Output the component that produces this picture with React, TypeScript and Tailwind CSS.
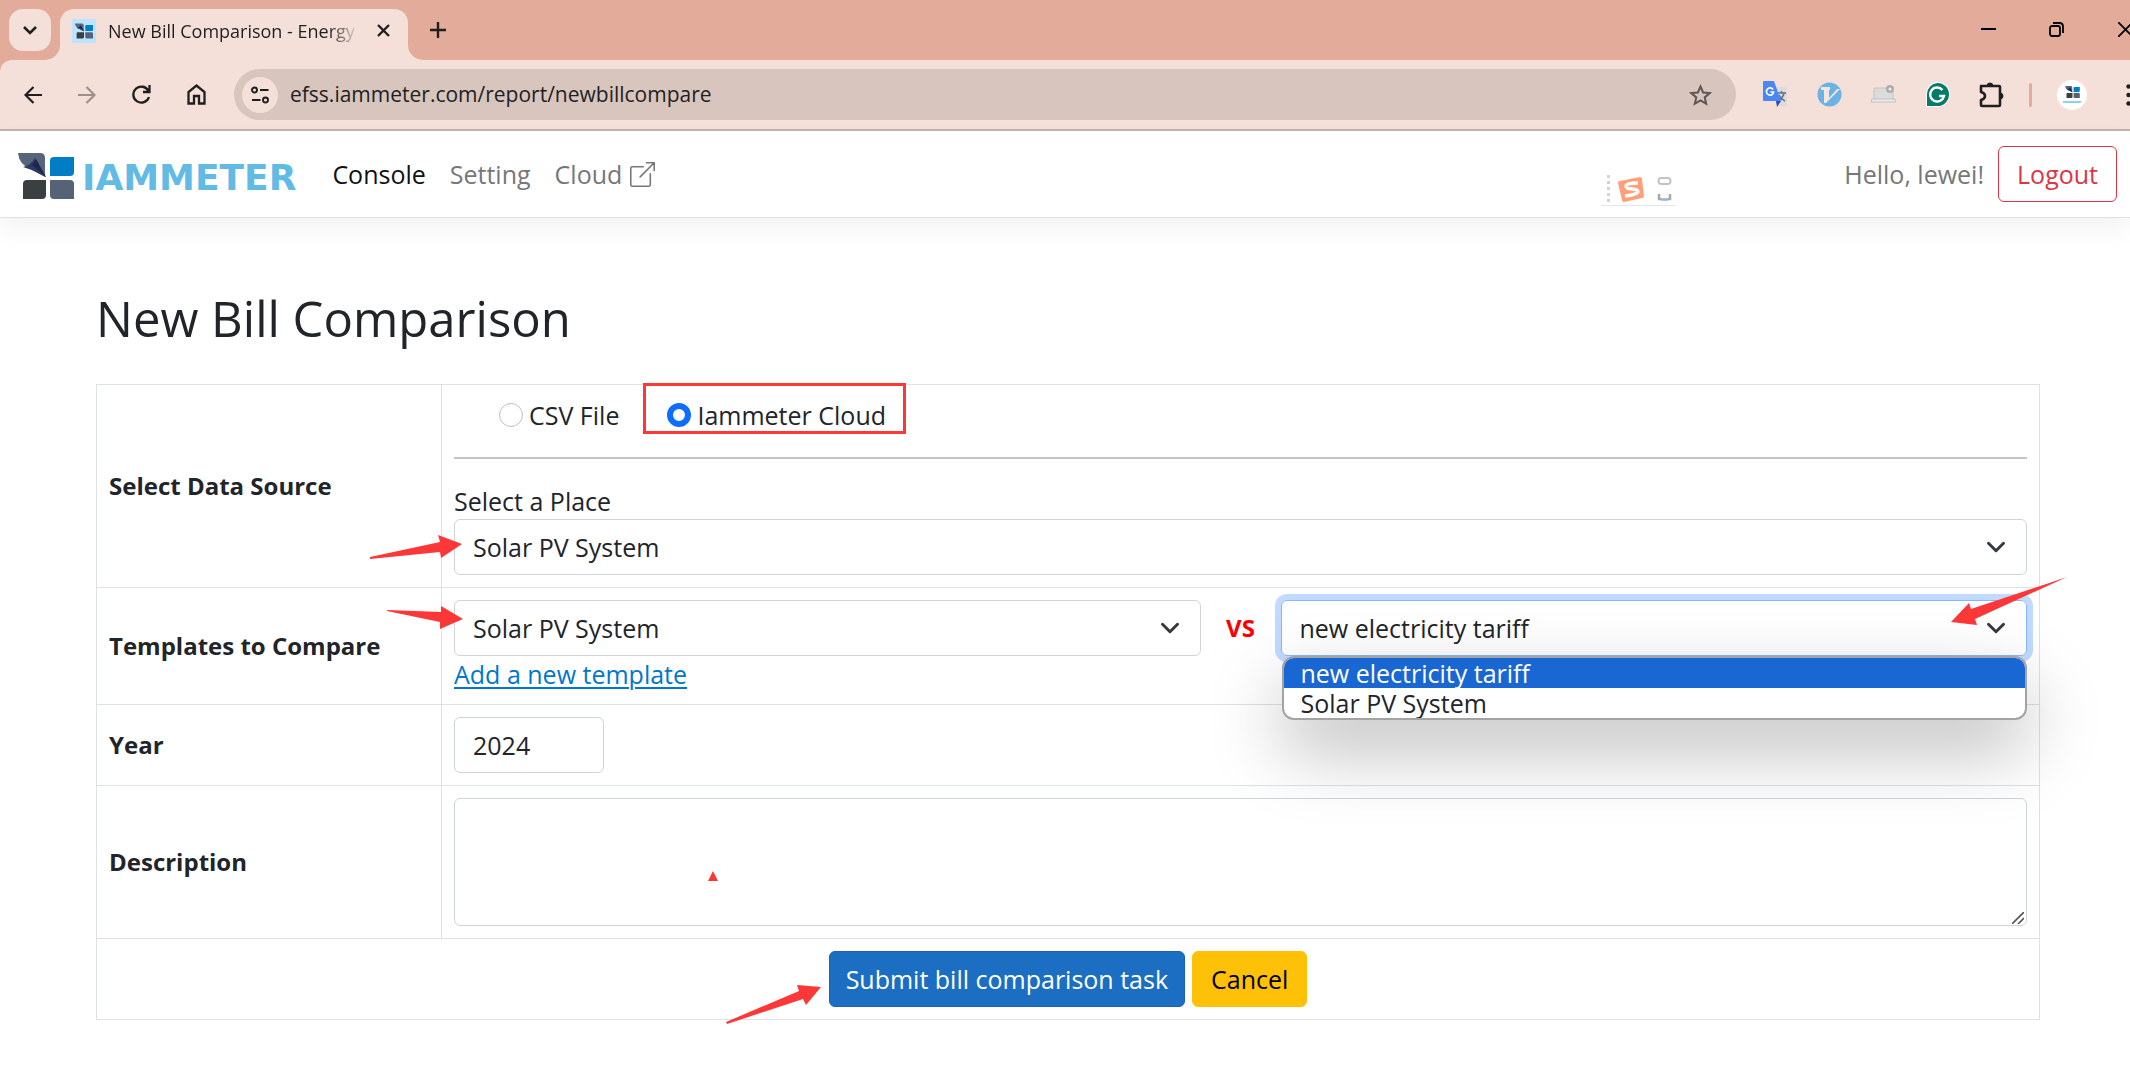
import React, { useState } from 'react';
import clsx from 'clsx';

const templates = ['new electricity tariff', 'Solar PV System'];

const iconButton = 'flex items-center justify-center shrink-0';
const fieldClass =
  'block w-full h-14 px-[18px] border border-[#ced4da] rounded-md bg-transparent text-[#212529] outline-none appearance-none';

/* ---------- drawings ---------- */

const LogoMark: React.FC<{ className?: string }> = ({ className }) => (
  <svg viewBox="0 0 56 46" className={className} aria-hidden="true">
    <path d="M0 0h22q5 0 5 5v19L14 17Q1 12 0 0z" fill="#56657a" />
    <path d="M5 14Q13 12 17 5l11 19-14-7z" fill="#2b3a6b" />
    <path d="M14 12l4-6 10 18z" fill="#1f2747" />
    <path d="M36 4h20v15q0 4-4 4H32V8q0-4 4-4z" fill="#007dc5" />
    <path d="M9 27h19v15q0 4-4 4H5V31q0-4 4-4z" fill="#3a3f42" />
    <path d="M32 27h20q4 0 4 4v15H36q-4 0-4-4z" fill="#566275" />
  </svg>
);

const Chevron = () => (
  <svg
    viewBox="0 0 16 16"
    className="absolute right-[19px] top-4 w-6 h-6 pointer-events-none"
    fill="none"
    stroke="#343a40"
    strokeWidth="2"
    strokeLinecap="round"
    strokeLinejoin="round"
    aria-hidden="true"
  >
    <path d="M3 5.5l5 5 5-5" />
  </svg>
);

interface ArrowProps {
  width: number;
  height: number;
  points: string;
  className: string;
}

const Arrow: React.FC<ArrowProps> = ({ width, height, points, className }) => (
  <svg
    width={width}
    height={height}
    viewBox={`0 0 ${width} ${height}`}
    className={clsx('absolute pointer-events-none z-30', className)}
    aria-hidden="true"
  >
    <polygon points={points} fill="#fb3837" />
  </svg>
);

/* ---------- browser window ---------- */

const TabStrip = () => (
  <div className="flex items-end h-[60px] pl-[9px] bg-[#e3ab99] overflow-hidden">
    <button aria-label="Search tabs" className={clsx(iconButton, 'w-[42px] h-[42px] mb-[9px] rounded-[14px] bg-[#f5e0d9]')}>
      <svg width="14" height="9" viewBox="0 0 14 9" fill="none" stroke="#1f1f1f" strokeWidth="2.6" aria-hidden="true">
        <path d="M1 1l6 6 6-6" />
      </svg>
    </button>

    <div className="relative flex items-center w-[348px] h-[51px] ml-[9px] pl-3 pr-[18px] pb-2 rounded-t-[14px] bg-[#f5e0d9]">
      <svg width="15" height="15" viewBox="0 0 15 15" className="absolute -left-[15px] bottom-0" aria-hidden="true">
        <path d="M15 0v15H0A15 15 0 0 0 15 0z" fill="#f5e0d9" />
      </svg>
      <svg width="15" height="15" viewBox="0 0 15 15" className="absolute -right-[15px] bottom-0" aria-hidden="true">
        <path d="M0 0v15h15A15 15 0 0 1 0 0z" fill="#f5e0d9" />
      </svg>
      <span className={clsx(iconButton, 'w-6 h-6 bg-[#bde4ff]')}>
        <LogoMark className="w-[18px] h-4" />
      </span>
      <span className="flex-1 ml-3 mr-[18px] overflow-hidden whitespace-nowrap text-lg text-[#1f1f1f] [mask-image:linear-gradient(to_right,black_88%,transparent)]">
        New Bill Comparison - Energy
      </span>
      <button aria-label="Close tab" className={iconButton}>
        <svg width="13" height="13" viewBox="0 0 13 13" stroke="#1f1f1f" strokeWidth="2.4" aria-hidden="true">
          <path d="M1 1l11 11M12 1L1 12" />
        </svg>
      </button>
    </div>

    <button aria-label="New tab" className={clsx(iconButton, 'w-[42px] h-[42px] mb-[9px] ml-[9px]')}>
      <svg width="16" height="16" viewBox="0 0 16 16" stroke="#1f1f1f" strokeWidth="2.4" aria-hidden="true">
        <path d="M8 0v16M0 8h16" />
      </svg>
    </button>

    <div className="flex items-center self-start h-[58px] ml-auto -mr-3">
      <button aria-label="Minimize" className={clsx(iconButton, 'w-[68px]')}>
        <svg width="15" height="15" viewBox="0 0 15 15" stroke="#000" strokeWidth="2" aria-hidden="true">
          <path d="M0 7h15" />
        </svg>
      </button>
      <button aria-label="Restore" className={clsx(iconButton, 'w-[68px]')}>
        <svg width="15" height="15" viewBox="0 0 15 15" fill="none" stroke="#000" strokeWidth="1.8" aria-hidden="true">
          <rect x="1" y="4" width="10" height="10" rx="2" />
          <path d="M4 1h6.5q3.5 0 3.5 3.5V11" />
        </svg>
      </button>
      <button aria-label="Close" className={clsx(iconButton, 'w-[52px] pl-[18px]')}>
        <svg width="15" height="15" viewBox="0 0 15 15" stroke="#000" strokeWidth="1.8" aria-hidden="true">
          <path d="M0 0l15 15M15 0L0 15" />
        </svg>
      </button>
    </div>
  </div>
);

const Extensions = () => (
  <div className="flex items-center gap-[29px] ml-[27px] -mr-0.5">
    <button aria-label="Translate" className={iconButton}>
      <svg width="25" height="27" viewBox="0 0 25 27" aria-hidden="true">
        <path d="M10 6h13q1 0 1 1v17q0 1-1 1h-9z" fill="#dcdcdc" />
        <path d="M14 12h9M18.5 10v2M21 12q-1 5-6 8M16 14q2 4 6 6" stroke="#5f7383" strokeWidth="1.5" fill="none" />
        <path d="M13 20h5l-4 6z" fill="#2a49b8" />
        <path d="M1 0h10l7 20H1q-1 0-1-1V1q0-1 1-1z" fill="#4a87f5" />
        <path d="M10 8.5A3.600 3.600 0 1 0 10.6 11H7.5" stroke="#fff" strokeWidth="1.7" fill="none" />
      </svg>
    </button>
    <button aria-label="Vimium" className={iconButton}>
      <svg width="25" height="25" viewBox="0 0 25 25" aria-hidden="true">
        <circle cx="12.5" cy="12.5" r="12" fill="#6ab3e6" />
        <path d="M4 5h9v3h-1v8l8-9h3L9 21H7V8H4z" fill="#f5e6e2" />
      </svg>
    </button>
    <button aria-label="Screen capture" className={iconButton}>
      <svg width="25" height="21" viewBox="0 0 25 21" aria-hidden="true">
        <rect x="3" y="4" width="19" height="12" rx="1" fill="#dcdcdc" stroke="#c2c2c2" />
        <path d="M1 15h23l1 3H0z" fill="#e9e9e9" stroke="#b9b9b9" strokeWidth=".8" />
        <circle cx="19" cy="5" r="4" fill="#adadad" />
        <circle cx="19" cy="5" r="1.5" fill="#ececec" />
      </svg>
    </button>
    <button aria-label="Grammarly" className={iconButton}>
      <svg width="25" height="25" viewBox="0 0 25 25" aria-hidden="true">
        <path d="M12.5 0a12 12 0 1 1 0 25H1V12A12 12 0 0 1 12.5 0z" fill="#fff" />
        <path d="M12.5 1a11 11 0 1 1 0 23H2V12A11 11 0 0 1 12.5 1z" fill="#057a68" />
        <path d="M17.5 8a7 7 0 1 0 1.5 6h-5" stroke="#fff" strokeWidth="2.4" fill="none" />
      </svg>
    </button>
    <button aria-label="Extensions" className={iconButton}>
      <svg width="25" height="26" viewBox="0 0 25 26" aria-hidden="true">
        <path d="M2 4h18q1 0 1 1v18q0 1-1 1H3q-1 0-1-1v-5q4-1 4-4t-4-4z" fill="none" stroke="#1f1f1f" strokeWidth="2.6" strokeLinejoin="round" />
        <path d="M8 4a3 3 0 0 1 6 0zM21 11a3 3 0 0 1 0 6z" fill="#1f1f1f" stroke="#1f1f1f" />
      </svg>
    </button>
    <span className="w-[3px] h-6 -ml-1 rounded-sm bg-[#e3ab99]" />
    <button aria-label="Profile" className={clsx(iconButton, 'flex-col w-[30px] h-[30px] -ml-1 rounded-full bg-white')}>
      <LogoMark className="w-[15px] h-3" />
      <span className="w-[18px] h-0.5 mt-[3px] bg-[#8fd0ee]" />
    </button>
    <button aria-label="Menu" className={clsx(iconButton, 'w-4 pl-2')}>
      <svg width="5" height="22" viewBox="0 0 5 22" className="shrink-0" fill="#1f1f1f" aria-hidden="true">
        <circle cx="2.5" cy="2.5" r="2.2" />
        <circle cx="2.5" cy="11" r="2.2" />
        <circle cx="2.5" cy="19.5" r="2.2" />
      </svg>
    </button>
  </div>
);

const Toolbar = () => (
  <div className="bg-[#e3ab99]">
    <div className="flex items-center h-[71px] pl-6 border-b-2 border-[#c4b0aa] rounded-tl-xl bg-[#f5e0d9] overflow-hidden">
      <div className="flex items-center gap-9">
        <button aria-label="Back" className={iconButton}>
          <svg width="18" height="18" viewBox="0 0 18 18" fill="none" stroke="#1f1f1f" strokeWidth="2.2" aria-hidden="true">
            <path d="M18 9H2M9.5 1L1.5 9l8 8" />
          </svg>
        </button>
        <button aria-label="Forward" className={iconButton}>
          <svg width="18" height="18" viewBox="0 0 18 18" fill="none" stroke="#9d8f8b" strokeWidth="2.2" aria-hidden="true">
            <path d="M0 9h16M8.5 1l8 8-8 8" />
          </svg>
        </button>
        <button aria-label="Reload" className={iconButton}>
          <svg width="19" height="19" viewBox="0 0 19 19" fill="none" stroke="#1f1f1f" strokeWidth="2.3" aria-hidden="true">
            <path d="M16.5 6A8 8 0 1 0 17 12M17.5 0v7H11" />
          </svg>
        </button>
        <button aria-label="Home" className={iconButton}>
          <svg width="19" height="21" viewBox="0 0 19 21" fill="none" stroke="#1f1f1f" strokeWidth="2.3" aria-hidden="true">
            <path d="M1.5 19.5V8l8-6.5 8 6.5v11.5H12V12H7v7.5z" />
          </svg>
        </button>
      </div>

      <div className="flex items-center flex-1 h-[51px] ml-7 pl-2 pr-6 rounded-full bg-[#d7c5be]">
        <button aria-label="View site information" className={clsx(iconButton, 'w-9 h-9 rounded-full bg-[#f5e0d9]')}>
          <svg width="18" height="18" viewBox="0 0 18 18" fill="none" stroke="#1f1f1f" strokeWidth="1.9" aria-hidden="true">
            <circle cx="3.5" cy="4" r="2.5" />
            <path d="M9 4h8.5M1 14h8.5" />
            <circle cx="14.5" cy="14" r="2.5" />
          </svg>
        </button>
        <div className="flex-1 ml-3">
          <input
            aria-label="Address"
            defaultValue="efss.iammeter.com/report/newbillcompare"
            className="block w-full h-[34px] mb-0.5 bg-transparent text-[21px] text-[#1f1f1f] outline-none"
          />
        </div>
        <button aria-label="Bookmark this tab" className={iconButton}>
          <svg width="23" height="22" viewBox="0 0 23 22" fill="none" stroke="#5d5654" strokeWidth="2" aria-hidden="true">
            <path d="M11.5 2.5l2.6 6 6.6.6-5 4.3 1.5 6.4-5.7-3.4-5.7 3.4 1.5-6.4-5-4.3 6.6-.6z" />
          </svg>
        </button>
      </div>
      <Extensions />
    </div>
  </div>
);

/* ---------- page ---------- */

const Navbar = () => (
  <nav className="relative flex items-center h-[87px] pl-[18px] pr-[13px] border-b border-[#dee2e6] bg-white shadow-[0_12px_24px_rgba(0,0,0,0.05)]">
    <a href="#" className="flex items-center pt-1">
      <LogoMark className="w-14 h-[46px]" />
      <span className="ml-2 pt-1 font-['DejaVu_Sans'] font-bold text-[36px] leading-10 text-[#62bbe5]">IAMMETER</span>
    </a>
    <div className="flex items-center gap-6 ml-9 text-[#767778]">
      <a href="#" className="text-[#111]">Console</a>
      <a href="#">Setting</a>
      <a href="#" className="flex items-center gap-2">
        Cloud
        <svg width="25" height="25" viewBox="0 0 16 16" fill="none" stroke="#767778" strokeWidth="1" strokeLinejoin="round" strokeLinecap="round" aria-hidden="true">
          <path d="M8.5 3H1.5q-1 0-1 1v10.5q0 1 1 1H12q1 0 1-1V7.5M10.5.5h5v5M15.5.5L6.5 9.5" />
        </svg>
      </a>
    </div>

    {/* input method bar floating over the page */}
    <svg width="75" height="34" viewBox="0 0 75 34" className="absolute right-[454px] top-[42px]" aria-hidden="true">
      <path d="M7.5 2v30" stroke="#d4d4d4" strokeWidth="3" strokeDasharray="3 3" />
      <path d="M0 32.5h75" stroke="#e6e6e6" />
      <path d="M19 8l20-4q2 0 2 2l2 17q0 2-2 2l-18 4q-2 0-2-2l-4-17q0-2 2-2z" fill="#ffa07a" />
      <path d="M37 10q-12 0-12 3.500c0 4 12 1 12 5q0 3-13 4.500" stroke="#fff" strokeWidth="3.5" fill="none" />
      <rect x="57.5" y="5" width="12" height="6" rx="3" fill="none" stroke="#c3c3c3" strokeWidth="2" />
      <path d="M58 21v5h2M69 21v5h-2" fill="none" stroke="#a8a8a8" strokeWidth="2.5" />
      <path d="M60 26.5h7" stroke="#8fb4d8" strokeWidth="2.5" />
    </svg>

    <span className="ml-auto text-[#767778]">Hello, lewei!</span>
    <button className="h-14 ml-3.5 px-[18px] border border-[#dc3545] rounded-md text-[#dc3545]">Logout</button>
  </nav>
);

interface RowProps {
  label: string;
  htmlFor?: string;
  children: React.ReactNode;
}

const Row: React.FC<RowProps> = ({ label, htmlFor, children }) => (
  <tr>
    <th scope="row" className="border border-[#dee2e6] p-3 text-left align-middle text-[24px] font-bold">
      <label htmlFor={htmlFor}>{label}</label>
    </th>
    <td className="border border-[#dee2e6] p-3 align-top">{children}</td>
  </tr>
);

export default function App() {
  const [source, setSource] = useState<'csv' | 'cloud'>('cloud');
  const [target, setTarget] = useState(templates[0]);

  return (
    <div className="min-h-screen bg-white font-['Open_Sans',sans-serif] text-[25px] leading-9 text-[#212529] overflow-x-hidden">
      <TabStrip />
      <Toolbar />
      <Navbar />

      <main className="pl-24 pr-[90px] pt-[70px] pb-14">
        <h1 className="text-[49px] leading-[60px] mb-9">New Bill Comparison</h1>

        <form onSubmit={(e) => e.preventDefault()}>
          <table className="w-full table-fixed border-collapse">
            <colgroup>
              <col className="w-[345px]" />
              <col />
            </colgroup>
            <tbody>
              <Row label="Select Data Source">
                <div className="flex items-center h-9 pl-[45px]">
                  <label className="flex items-center gap-1.5">
                    <input
                      type="radio"
                      name="source"
                      checked={source === 'csv'}
                      onChange={() => setSource('csv')}
                      className="appearance-none w-6 h-6 rounded-full border border-[#bfbfbf] checked:border-[6px] checked:border-[#0d6efd]"
                    />
                    CSV File
                  </label>
                  <label className="relative flex items-center gap-1.5 ml-12">
                    <input
                      type="radio"
                      name="source"
                      checked={source === 'cloud'}
                      onChange={() => setSource('cloud')}
                      className="appearance-none w-6 h-6 rounded-full border border-[#bfbfbf] checked:border-[6px] checked:border-[#0d6efd]"
                    />
                    Iammeter Cloud
                    <span className="absolute -left-6 -right-5 -top-3.5 h-[51px] border-3 border-[#fb3837] pointer-events-none" />
                  </label>
                </div>
                <hr className="my-6 border-t-2 border-[#c4c5c6]" />
                <label htmlFor="place" className="block">Select a Place</label>
                <div className="relative">
                  <select id="place" className={fieldClass}>
                    <option>Solar PV System</option>
                  </select>
                  <Chevron />
                  <Arrow width={92} height={24} points="0,22 70,7 68,0 92,9 71,23 70,17 0,24" className="-left-[84px] top-4" />
                </div>
              </Row>

              <Row label="Templates to Compare" htmlFor="base">
                <div className="flex items-center">
                  <div className="relative flex-1">
                    <select id="base" className={fieldClass}>
                      <option>Solar PV System</option>
                    </select>
                    <Chevron />
                    <Arrow width={76} height={23} points="0,4 54,6 54,0 76,13 53,23 53,16 0,5" className="-left-[67px] top-1.5" />
                  </div>
                  <span className="w-20 text-center text-[24px] font-bold text-[#f00]">VS</span>
                  <div className="relative flex-1">
                    <select
                      aria-label="Template to compare with"
                      value={target}
                      onChange={(e) => setTarget(e.target.value)}
                      className="block w-full h-14 px-[18px] border border-[#86b7fe] rounded-md bg-transparent outline-none appearance-none shadow-[0_0_0_6px_#c2daff]"
                    >
                      {templates.map((name) => (
                        <option key={name}>{name}</option>
                      ))}
                    </select>
                    <Chevron />
                    <ul
                      role="listbox"
                      aria-label="Templates"
                      className="absolute z-20 left-px right-0 top-full border-2 border-[#a3a3a3] rounded-xl bg-white overflow-hidden shadow-[0_30px_72px_rgba(0,0,0,0.27)]"
                    >
                      {templates.map((name) => (
                        <li
                          key={name}
                          role="option"
                          aria-selected={name === target}
                          onClick={() => setTarget(name)}
                          className={clsx('h-[30px] px-[17px] leading-[30px]', name === target && 'bg-[#1967d2] text-white')}
                        >
                          {name}
                        </li>
                      ))}
                    </ul>
                    <Arrow width={116} height={48} points="116,0 24,42 26,48 0,45 18,26 20,32" className="-right-[40px] -top-[23px]" />
                  </div>
                </div>
                <a href="#" className="inline-block align-top text-[#0077cc] underline underline-offset-3 decoration-2">Add a new template</a>
              </Row>

              <Row label="Year" htmlFor="year">
                <div className="w-[150px]">
                  <input id="year" defaultValue="2024" className={fieldClass} />
                </div>
              </Row>

              <Row label="Description" htmlFor="description">
                <div className="relative">
                  <textarea id="description" className="block w-full h-32 px-[18px] py-[9px] border border-[#ced4da] rounded-md bg-transparent outline-none resize-none" />
                  <svg width="12" height="12" viewBox="0 0 12 12" className="absolute right-[3px] bottom-0.5 pointer-events-none" stroke="#555" strokeWidth="1.6" aria-hidden="true">
                    <path d="M0 12L12 0M6 12l6-6" />
                  </svg>
                  <Arrow width={10} height={10} points="5,0 10,10 0,10" className="left-[254px] top-[73px]" />
                </div>
              </Row>

              <tr>
                <td colSpan={2} className="border border-[#dee2e6] p-3">
                  <div className="flex justify-center gap-[7px]">
                    <button type="submit" className="relative h-14 px-4 border border-[#1a62b3] rounded-md bg-[#1b6ec2] text-white">
                      Submit bill comparison task
                      <Arrow width={95} height={39} points="0,37 73,6 71,0 95,2 80,20 77,14 1,39" className="-left-[104px] top-[33px]" />
                    </button>
                    <button type="button" className="h-14 px-[18px] border border-[#ffc107] rounded-md bg-[#ffc107] text-black">Cancel</button>
                  </div>
                </td>
              </tr>
            </tbody>
          </table>
        </form>
      </main>
    </div>
  );
}
